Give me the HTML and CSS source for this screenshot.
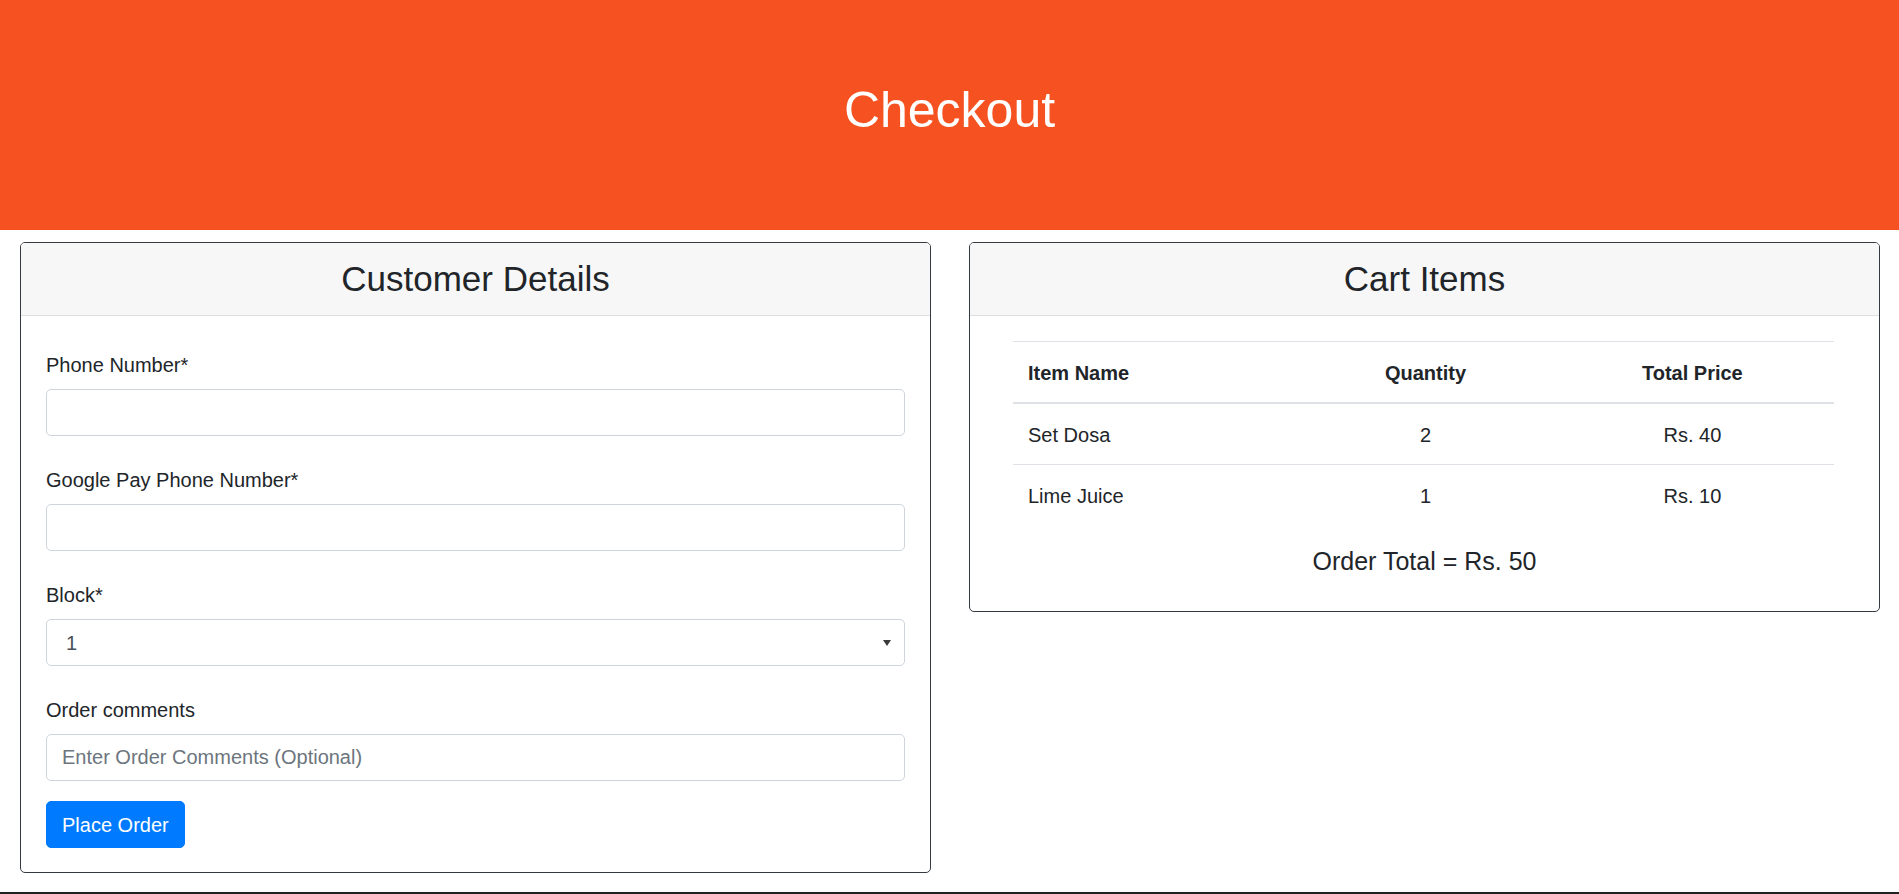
FILE: index.html
```html
<!DOCTYPE html>
<html lang="en">
<head>
<meta charset="utf-8">
<title>Checkout</title>
<link rel="stylesheet" href="styles.css">
</head>
<body>
<header class="hero">
  <h1 class="hero-title">Checkout</h1>
</header>
<main class="main">
  <section class="card">
    <div class="card-header"><h3 class="card-title">Customer Details</h3></div>
    <form class="card-body form-body">
      <div class="form-group">
        <label class="form-label" for="phone">Phone Number*</label>
        <input class="form-control" id="phone" type="text">
      </div>
      <div class="form-group">
        <label class="form-label" for="gpay">Google Pay Phone Number*</label>
        <input class="form-control" id="gpay" type="text">
      </div>
      <div class="form-group">
        <label class="form-label" for="block">Block*</label>
        <div class="select-wrap">
          <select class="form-control form-select" id="block">
            <option>1</option>
            <option>2</option>
            <option>3</option>
          </select>
        </div>
      </div>
      <div class="form-group form-group-last">
        <label class="form-label" for="comments">Order comments</label>
        <input class="form-control" id="comments" type="text" placeholder="Enter Order Comments (Optional)">
      </div>
      <button class="btn-primary" type="button">Place Order</button>
    </form>
  </section>
  <section class="card">
    <div class="card-header"><h3 class="card-title">Cart Items</h3></div>
    <div class="card-body cart-body">
      <div class="table-wrap">
        <table class="cart-table">
          <thead>
            <tr>
              <th class="col-name">Item Name</th>
              <th class="col-qty">Quantity</th>
              <th class="col-price">Total Price</th>
            </tr>
          </thead>
          <tbody>
            <tr>
              <td class="col-name">Set Dosa</td>
              <td class="col-qty">2</td>
              <td class="col-price">Rs. 40</td>
            </tr>
            <tr>
              <td class="col-name">Lime Juice</td>
              <td class="col-qty">1</td>
              <td class="col-price">Rs. 10</td>
            </tr>
          </tbody>
        </table>
      </div>
      <h5 class="order-total">Order Total = Rs. 50</h5>
    </div>
  </section>
</main>
<footer class="footer"></footer>
</body>
</html>
```

FILE: styles.css
```css
* { box-sizing: border-box; }

html, body {
  margin: 0;
  padding: 0;
}

body {
  font-family: "Liberation Sans", Arial, sans-serif;
  font-size: 20px;
  line-height: 30px;
  color: #212529;
  background: #ffffff;
}

.hero {
  background: #f65221;
  height: 230px;
  padding-top: 80px;
  text-align: center;
}

.hero-title {
  margin: 0;
  font-size: 50px;
  line-height: 60px;
  font-weight: 400;
  color: #ffffff;
}

.main {
  display: grid;
  grid-template-columns: 1fr 1fr;
  column-gap: 38px;
  align-items: start;
  padding: 12px 19px 19px 20px;
}

.card {
  background: #ffffff;
  border: 1px solid #343a40;
  border-radius: 5px;
  overflow: hidden;
}

.card-header {
  background: #f7f7f7;
  border-bottom: 1px solid #dfdfdf;
  padding: 15px 25px;
  text-align: center;
}

.card-title {
  margin: 0;
  font-size: 35px;
  line-height: 42px;
  font-weight: 400;
  color: #212529;
}

.form-body {
  margin: 0;
  padding: 32px 25px 24px 25px;
}

.form-group {
  margin-bottom: 27px;
}

.form-group-last {
  margin-bottom: 20px;
}

.form-label {
  display: block;
  padding-top: 2px;
  margin-bottom: 9px;
  line-height: 30px;
}

.form-control {
  display: block;
  width: 100%;
  height: 47px;
  padding: 0 15px;
  font-family: "Liberation Sans", Arial, sans-serif;
  font-size: 20px;
  color: #495057;
  background: #ffffff;
  border: 1px solid #ced4da;
  border-radius: 5px;
  outline: none;
}

.form-control::placeholder {
  color: #6c757d;
  opacity: 1;
}

.select-wrap {
  position: relative;
}

.form-select {
  -webkit-appearance: none;
  appearance: none;
  padding-left: 19px;
}

.select-wrap::after {
  content: "";
  position: absolute;
  right: 14px;
  top: 21px;
  width: 0;
  height: 0;
  border-left: 4px solid transparent;
  border-right: 4px solid transparent;
  border-top: 6px solid #3a3a3a;
  pointer-events: none;
}

.btn-primary {
  display: inline-block;
  height: 47px;
  padding: 1px 15px 0 15px;
  font-family: "Liberation Sans", Arial, sans-serif;
  font-size: 20px;
  line-height: 30px;
  color: #ffffff;
  background: #007bff;
  border: 1px solid #007bff;
  border-radius: 5px;
  cursor: pointer;
}

.cart-body {
  padding: 25px;
}

.table-wrap {
  padding: 0 20px 0 18px;
}

.cart-table {
  width: 100%;
  border-collapse: collapse;
  margin-bottom: 20px;
}

.cart-table th,
.cart-table td {
  padding: 16px 15px 14px 15px;
  line-height: 30px;
  border-top: 1px solid #dee2e6;
  vertical-align: top;
}

.cart-table thead th {
  border-bottom: 2px solid #dee2e6;
  font-weight: 700;
}

.col-name {
  width: 35%;
  text-align: left;
}

.col-qty {
  width: 30.5%;
  text-align: center;
}

.col-price {
  width: 34.5%;
  text-align: center;
}

.order-total {
  margin: 0 0 10px 0;
  padding-top: 1px;
  font-size: 25px;
  line-height: 30px;
  font-weight: 400;
  text-align: center;
}

.footer {
  height: 60px;
  background: #222222;
}
```
